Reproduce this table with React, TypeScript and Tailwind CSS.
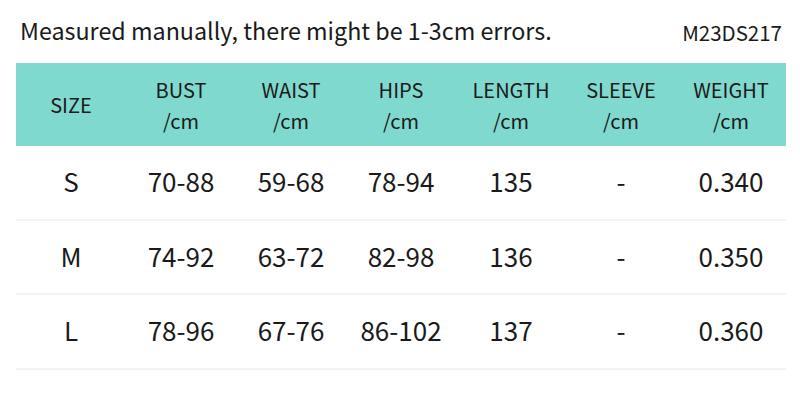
import React from 'react';

const headers = [
    ['SIZE'],
    ['BUST', '/cm'],
    ['WAIST', '/cm'],
    ['HIPS', '/cm'],
    ['LENGTH', '/cm'],
    ['SLEEVE', '/cm'],
    ['WEIGHT', '/cm'],
];

const rows = [
    ['S', '70-88', '59-68', '78-94', '135', '-', '0.340'],
    ['M', '74-92', '63-72', '82-98', '136', '-', '0.350'],
    ['L', '78-96', '67-76', '86-102', '137', '-', '0.360'],
];

const App: React.FC = () => {
    return (
        <div className="w-[800px] h-[412px] bg-white text-[#1a1a1a] font-['Noto_Sans_CJK_SC','Noto_Sans',sans-serif]">
            {/* Title line */}
            <div className="flex items-end justify-between pl-[20px] pr-[18px] h-[50px] pb-[8px]">
                <p className="text-[23.3px] leading-none">Measured manually, there might be 1-3cm errors.</p>
                <p className="text-[20.5px] leading-none">M23DS217</p>
            </div>

            <div className="mx-[16px] mt-[13px] w-[770px]">
                {/* Header */}
                <div className="grid grid-cols-7 h-[83px] bg-[#80d9cf] items-center text-[20px] leading-[31px] text-center">
                    {headers.map((h, i) => (
                        <div key={i} className="flex flex-col items-center">
                            {h.map((t) => (
                                <span key={t}>{t}</span>
                            ))}
                        </div>
                    ))}
                </div>

                {/* Body */}
                {rows.map((r, i) => (
                    <div key={i} className="grid grid-cols-7 h-[74.5px] pb-[3px] items-center text-center text-[26px] border-b-2 border-[#f3f3f3]">
                        {r.map((c, j) => (
                            <span key={j}>{c}</span>
                        ))}
                    </div>
                ))}
            </div>
        </div>
    );
};

export default App;
